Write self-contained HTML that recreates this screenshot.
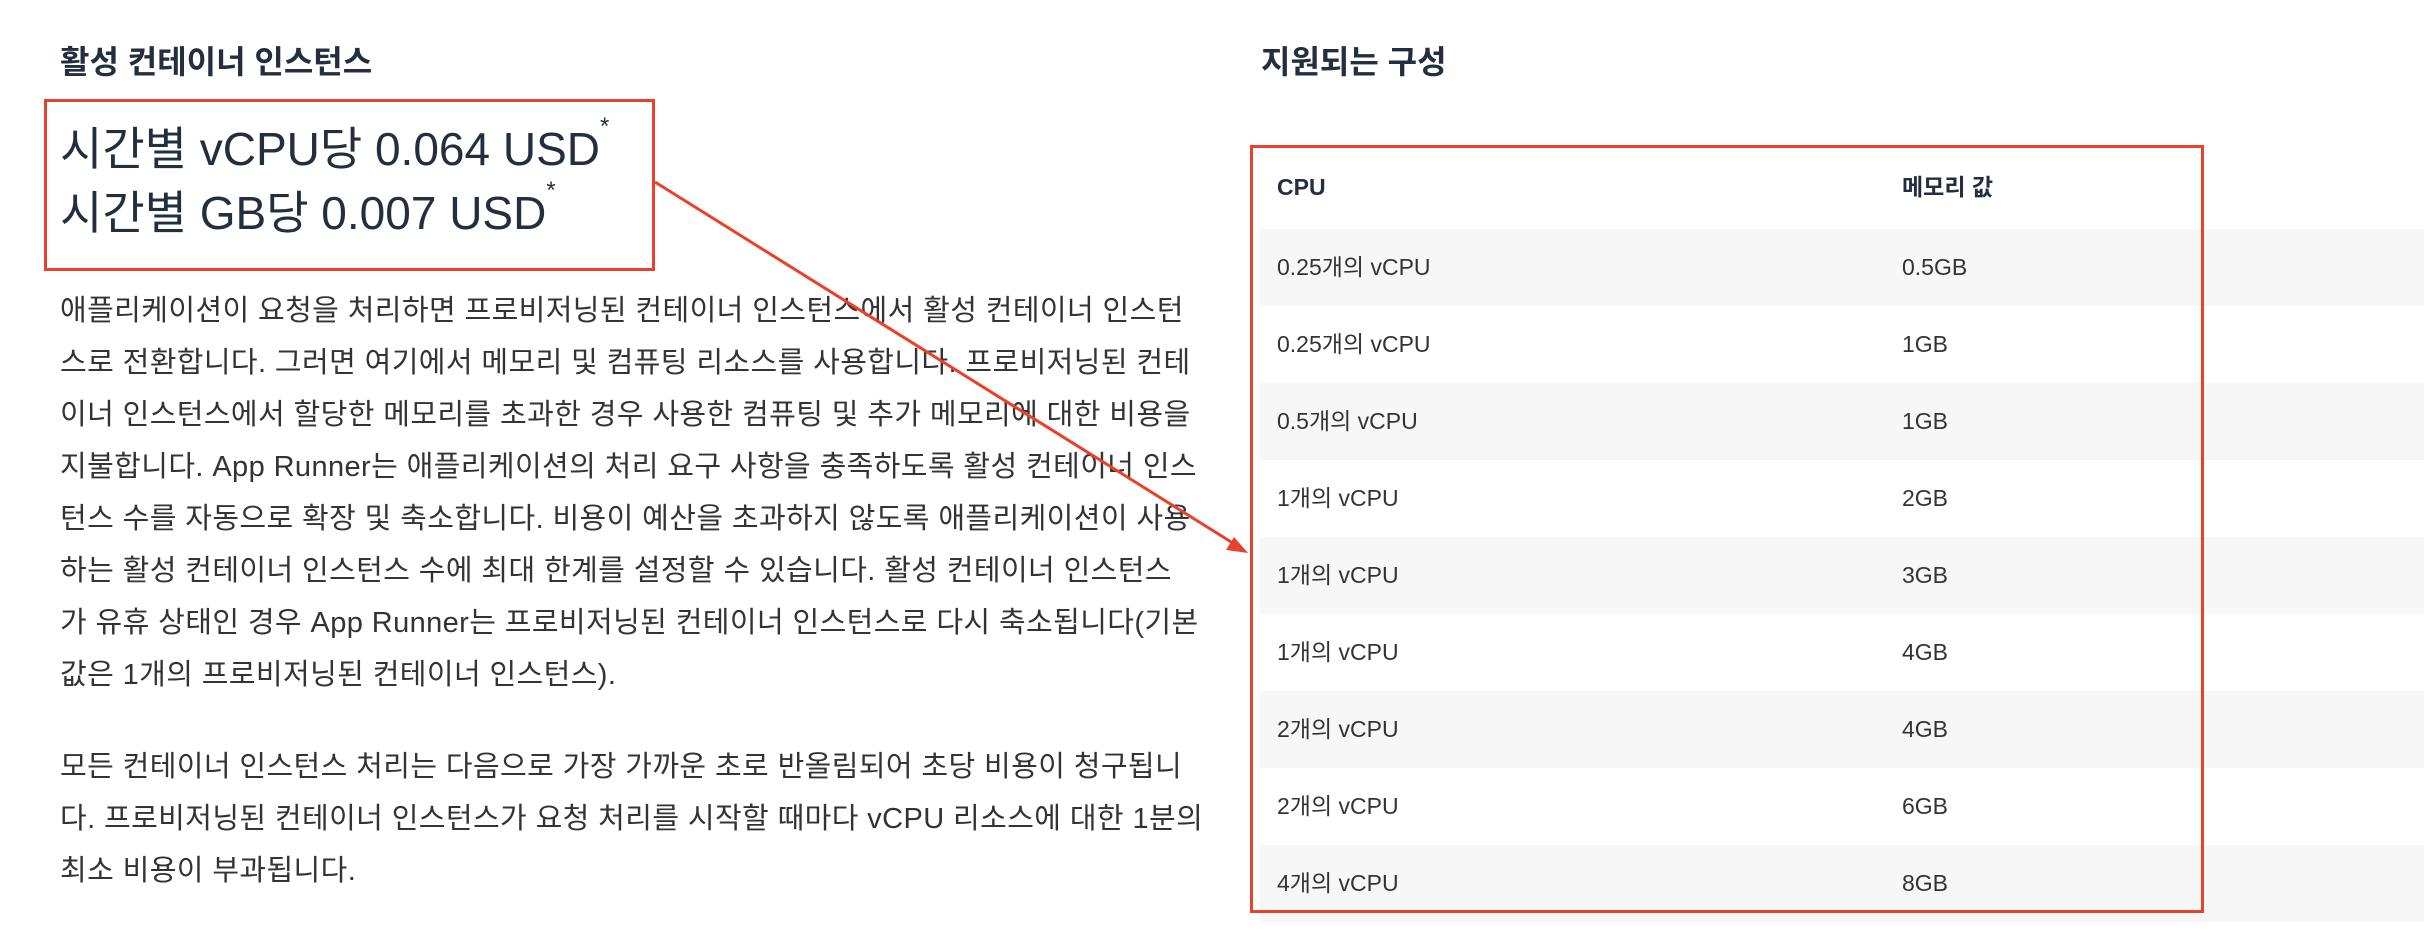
<!DOCTYPE html>
<html><head><meta charset="utf-8"><style>
body{margin:0;width:2424px;height:930px;background:#fff;position:relative;overflow:hidden;font-family:"Liberation Sans","Noto Sans CJK KR",sans-serif;color:#232f3e}
.h{position:absolute;top:40px;font-size:32px;font-weight:bold;line-height:44px;white-space:nowrap}
.price{position:absolute;left:60px;top:117px;font-size:46px;line-height:64px;white-space:nowrap}
.price sup{font-size:24px;vertical-align:top;line-height:20px}
.box1{position:absolute;left:44px;top:99px;width:605px;height:166px;border:3px solid #e8412c}
.p{position:absolute;left:60px;font-size:29px;letter-spacing:0.4px;line-height:52px;color:#333;white-space:nowrap}
.tbl{position:absolute;left:1260px;top:145px;width:1164px}
.row{height:77px;line-height:77px;position:relative;font-size:23px;color:#333;white-space:nowrap}
.row.g{background:#f7f7f7}
.row span{position:absolute;top:0}
.c1{left:17px}.c2{left:642px}
.hd{height:84px;line-height:84px;font-weight:bold;color:#232f3e}
.box2{position:absolute;left:1250px;top:145px;width:948px;height:762px;border:3px solid #e8412c}
</style></head><body>
<div class="h" style="left:60px">활성 컨테이너 인스턴스</div>
<div class="h" style="left:1261px">지원되는 구성</div>
<div class="price">시간별 vCPU당 0.064 USD<sup>*</sup><br>시간별 GB당 0.007 USD<sup>*</sup></div>
<div class="box1"></div>
<div class="p" style="top:285px">애플리케이션이 요청을 처리하면 프로비저닝된 컨테이너 인스턴스에서 활성 컨테이너 인스턴<br>스로 전환합니다. 그러면 여기에서 메모리 및 컴퓨팅 리소스를 사용합니다. 프로비저닝된 컨테<br>이너 인스턴스에서 할당한 메모리를 초과한 경우 사용한 컴퓨팅 및 추가 메모리에 대한 비용을<br>지불합니다. App Runner는 애플리케이션의 처리 요구 사항을 충족하도록 활성 컨테이너 인스<br>턴스 수를 자동으로 확장 및 축소합니다. 비용이 예산을 초과하지 않도록 애플리케이션이 사용<br>하는 활성 컨테이너 인스턴스 수에 최대 한계를 설정할 수 있습니다. 활성 컨테이너 인스턴스<br>가 유휴 상태인 경우 App Runner는 프로비저닝된 컨테이너 인스턴스로 다시 축소됩니다(기본<br>값은 1개의 프로비저닝된 컨테이너 인스턴스).</div>
<div class="p" style="top:741px">모든 컨테이너 인스턴스 처리는 다음으로 가장 가까운 초로 반올림되어 초당 비용이 청구됩니<br>다. 프로비저닝된 컨테이너 인스턴스가 요청 처리를 시작할 때마다 vCPU 리소스에 대한 1분의<br>최소 비용이 부과됩니다.</div>
<div class="tbl">
<div class="row hd"><span class="c1">CPU</span><span class="c2">메모리 값</span></div>
<div class="row g"><span class="c1">0.25개의 vCPU</span><span class="c2">0.5GB</span></div>
<div class="row"><span class="c1">0.25개의 vCPU</span><span class="c2">1GB</span></div>
<div class="row g"><span class="c1">0.5개의 vCPU</span><span class="c2">1GB</span></div>
<div class="row"><span class="c1">1개의 vCPU</span><span class="c2">2GB</span></div>
<div class="row g"><span class="c1">1개의 vCPU</span><span class="c2">3GB</span></div>
<div class="row"><span class="c1">1개의 vCPU</span><span class="c2">4GB</span></div>
<div class="row g"><span class="c1">2개의 vCPU</span><span class="c2">4GB</span></div>
<div class="row"><span class="c1">2개의 vCPU</span><span class="c2">6GB</span></div>
<div class="row g"><span class="c1">4개의 vCPU</span><span class="c2">8GB</span></div>
</div>
<div class="box2"></div>
<svg style="position:absolute;left:0;top:0" width="2424" height="930">
<line x1="655" y1="182" x2="1236" y2="545" stroke="#e8412c" stroke-width="3"/>
<polygon points="1248,553 1226,550 1234,537" fill="#e8412c"/>
</svg>
</body></html>
